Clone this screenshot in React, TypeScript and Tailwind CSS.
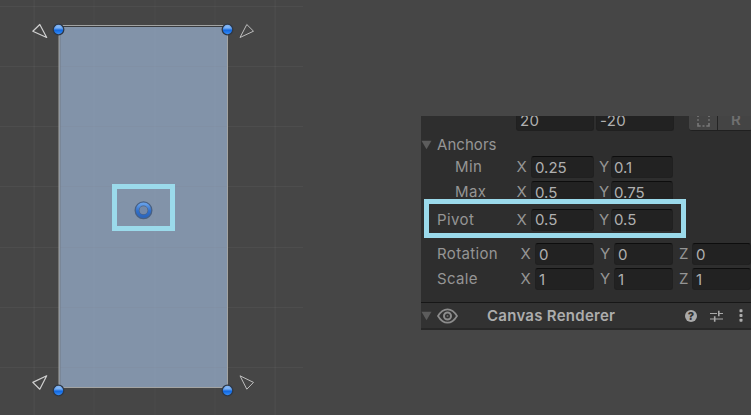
import React from "react";

const VERTICAL = [34, 94, 155, 215, 275];
const HORIZONTAL = [6, 66, 126, 186, 247, 307, 367];

function Handle({ x, y }: { x: number; y: number }) {
  return (
    <g>
      <circle cx={x} cy={y} r="5.3" fill="url(#ball)" stroke="#2e3847" strokeWidth="1.3" />
      <path d={`M${x - 3.6} ${y - 1.2}a3.8 3.8 0 0 1 7.2 0z`} fill="#a9cdf8" opacity="0.4" />
    </g>
  );
}

function SceneView() {
  return (
    <svg width="421" height="415" viewBox="0 0 421 415" className="block shrink-0">
      <defs>
        <linearGradient id="ball" x1="0" y1="0" x2="0" y2="1">
          <stop offset="0" stopColor="#8dbcf5" />
          <stop offset="0.45" stopColor="#4f94ee" />
          <stop offset="0.55" stopColor="#0f66e0" />
          <stop offset="1" stopColor="#3b92fb" />
        </linearGradient>
        <linearGradient id="ring" x1="0" y1="0" x2="0" y2="1">
          <stop offset="0" stopColor="#649ee8" />
          <stop offset="0.55" stopColor="#306fca" />
          <stop offset="1" stopColor="#2c66bd" />
        </linearGradient>
      </defs>
      <rect x="59" y="26" width="169" height="362" fill="#8293a9" />
      <g fill="#ffffff" fillOpacity="0.045">
        {VERTICAL.map((x) => (
          <rect key={x} x={x - 0.5} y="0" width="1.2" height="415" fillOpacity={x > 59 && x < 228 ? 0.025 : 0.045} />
        ))}
        {HORIZONTAL.map((y) => (
          <rect key={y} x="0" y={y} width="303" height="1" />
        ))}
      </g>
      <g fill="#6f7b8b" fillOpacity="0.22">
        {HORIZONTAL.slice(1).map((y) => (
          <rect key={y} x="60" y={y} width="167" height="1" />
        ))}
      </g>
      <path d="M60 26.5H227" stroke="#3a3c3f" strokeWidth="1" />
      <path d="M60.1 27V387" stroke="#727b86" strokeWidth="0.8" />
      <path d="M58 25.5H228M59 25V388M227.5 25V388M58 387.5H228" stroke="#a3a4a3" strokeWidth="1" fill="none" />
      <g fill="none" stroke="#d0d0d0" strokeWidth="1.2" strokeLinejoin="round">
        <path d="M39.8 24.5L32.8 31.2L46.7 37.5z" />
        <path d="M246.8 24.5L253.5 31.2L240 37.5z" strokeWidth="1" stroke="#bebebe" />
        <path d="M46.7 375.8L32.8 382.4L39.8 389.2z" />
        <path d="M240 375.8L253.5 382.4L246.8 389.2z" strokeWidth="1" stroke="#bebebe" />
      </g>
      <Handle x={58.5} y={29.5} />
      <Handle x={227.5} y={29.5} />
      <Handle x={58.5} y={390.5} />
      <Handle x={227.5} y={390.5} />
      <circle cx="143.5" cy="210.3" r="6" fill="none" stroke="#486083" strokeWidth="6" />
      <circle cx="143.5" cy="210.3" r="6.2" fill="none" stroke="url(#ring)" strokeWidth="3" />
      <circle cx="143.5" cy="210.3" r="4" fill="#7489a8" />
      <rect x="114.5" y="186.5" width="58" height="42" fill="none" stroke="#9bdaeb" strokeWidth="5" />
    </svg>
  );
}

function Field({ value, className }: { value: string; className: string }) {
  return (
    <div
      className={`flex h-[22px] shrink-0 items-center rounded-[3px] border border-[#202020] border-t-[#0d0d0d] bg-[#222222] text-[#b0b0b0] ${className}`}
    >
      {value}
    </div>
  );
}

function Axis({ name, className }: { name: string; className: string }) {
  return <span className={`shrink-0 ${className}`}>{name}</span>;
}

type PairProps = { label: string; x: string; y: string; indent?: boolean };

function PairRow({ label, x, y, indent = false }: PairProps) {
  const drop = indent ? "pt-px" : "pb-px";
  return (
    <div className="flex h-[22px] items-center">
      <span className={`shrink-0 tracking-[0.4px] ${indent ? "ml-[34px] w-[61.5px]" : "ml-4 w-[79.5px]"}`}>{label}</span>
      <Axis name="X" className="w-[14.5px]" />
      <Field value={x} className={`w-[63px] pl-[3px] ${drop}`} />
      <Axis name="Y" className="ml-[3px] w-[14px] text-center" />
      <Field value={y} className={`w-[62px] pl-[2px] ${drop}`} />
    </div>
  );
}

function TripleRow({ label, value }: { label: string; value: string }) {
  return (
    <div className="flex h-[22px] items-center">
      <span className="ml-4 w-[83.5px] shrink-0 tracking-[0.35px]">{label}</span>
      <Axis name="X" className="w-[14.5px]" />
      <Field value={value} className="w-[59px] pt-px pl-[3px]" />
      <Axis name="Y" className="ml-[6px] w-[14px]" />
      <Field value={value} className="w-[59px] pt-px pl-[3px]" />
      <Axis name="Z" className="ml-[6px] w-[13px]" />
      <Field value={value} className="w-[59px] pt-px pl-[3px]" />
    </div>
  );
}

function Arrow() {
  return (
    <svg width="11" height="10" viewBox="0 0 11 10" className="shrink-0">
      <path d="M.5.8h10L5.5 9.3z" fill="#5c5c5c" />
    </svg>
  );
}

function Inspector() {
  return (
    <div className="mt-[116px] flex h-[214px] w-[330px] shrink-0 flex-col overflow-hidden bg-[#2e2e2e] text-[15px] leading-[20px] text-[#959595]">
      <div className="flex h-[15px] shrink-0 items-end overflow-hidden">
        <Field value="20" className="ml-[95px] w-[78px] pt-px pl-[3px] tracking-[0.3px]" />
        <Field value="-20" className="ml-[2px] w-[78px] pt-px pl-[3px] tracking-[0.3px]" />
        <div className="ml-[15px] flex h-[22px] shrink-0 rounded-[3px] border-b border-[#202020] bg-[#444444]">
          <div className="flex w-[29px] items-center justify-center border-r border-[#242424]">
            <svg width="13" height="14" viewBox="0 0 13 14" className="mt-px" fill="none" stroke="#787878" strokeWidth="1.6">
              <path d="M1 4V1h3M5.5 1h2M9 1h3v3M1 6.2v1.6M12 6.2v1.6M12 10v3H9.3M7.5 13h-2M3.7 13H1v-3" />
            </svg>
          </div>
          <div className="flex w-[34px] items-center justify-center pt-px pl-[2px] font-semibold text-[#707070]">R</div>
        </div>
      </div>
      <div className="mt-[3px] flex h-[22px] shrink-0 items-center">
        <Arrow />
        <span className="ml-[5px] tracking-[0.05px]">Anchors</span>
      </div>
      <div className="flex flex-col gap-[3px]">
        <PairRow label="Min" x="0.25" y="0.1" indent />
        <PairRow label="Max" x="0.5" y="0.75" indent />
      </div>
      <div className="relative mt-[6px]">
        <PairRow label="Pivot" x="0.5" y="0.5" />
        <div className="absolute top-[-10px] left-[3px] h-[39px] w-[262px] border-[5px] border-[#9bdaeb]" />
      </div>
      <div className="mt-3 flex flex-col gap-[3px]">
        <TripleRow label="Rotation" value="0" />
        <TripleRow label="Scale" value="1" />
      </div>
      <div className="mt-3 flex h-[28px] shrink-0 items-center border-t border-b-2 border-t-[#171717] border-b-[#272727] bg-[#323232]">
        <Arrow />
        <svg width="21" height="16" viewBox="0 0 21 16" className="ml-[5px] shrink-0" fill="none" stroke="#8c8c8c">
          <path d="M1 8Q5 1.3 10.5 1.3T20 8Q16 14.7 10.5 14.7T1 8z" strokeWidth="1.7" />
          <circle cx="10.5" cy="8" r="3.5" strokeWidth="2" />
          <circle cx="10.5" cy="8" r="1" fill="#666" stroke="none" />
        </svg>
        <span className="ml-[29px] w-[198px] shrink-0 font-semibold tracking-[0.27px] text-[#adadad]">Canvas Renderer</span>
        <div className="flex h-[12px] w-[12px] shrink-0 items-center justify-center rounded-full bg-[#aaaaaa] text-[11px] font-extrabold text-[#303030]">?</div>
        <svg width="13" height="12" viewBox="0 0 13 12" className="ml-[13px] shrink-0" fill="none" stroke="#a8a8a8" strokeWidth="1.2">
          <path d="M0 3.5h7M8.8 3.5H13M0 9h4M4.7 9H13" />
          <path d="M8.8 .8v5.4M4.7 6.2v5.6" strokeWidth="1.6" />
        </svg>
        <svg width="4" height="13" viewBox="0 0 4 13" className="ml-[16px] shrink-0" fill="#adadad">
          <rect x=".5" y=".3" width="3" height="3" rx=".7" />
          <rect x=".5" y="5" width="3" height="3" rx=".7" />
          <rect x=".5" y="9.7" width="3" height="3" rx=".7" />
        </svg>
      </div>
    </div>
  );
}

export default function App() {
  return (
    <div className="flex h-[415px] w-[751px] overflow-hidden bg-[#464646] font-['Inter','Liberation_Sans',sans-serif]">
      <SceneView />
      <Inspector />
    </div>
  );
}
